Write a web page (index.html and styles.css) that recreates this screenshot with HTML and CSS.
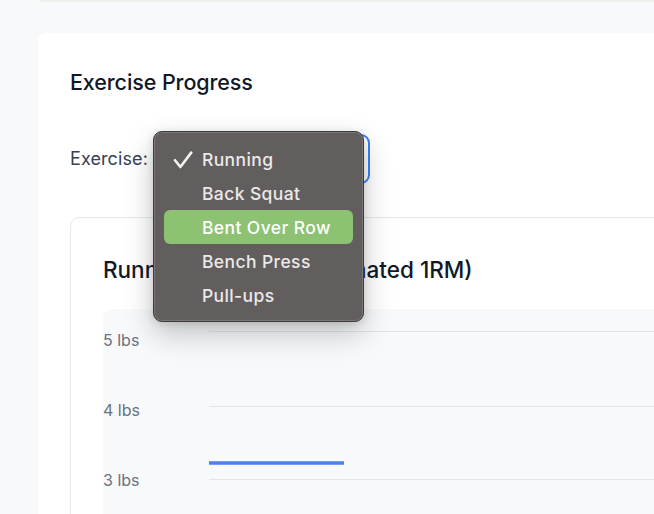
FILE: index.html
```html
<!DOCTYPE html>
<html lang="en">
<head>
<meta charset="utf-8">
<title>Exercise Progress</title>
<link rel="stylesheet" href="styles.css">
</head>
<body>
<div class="page">
  <div class="prev-card"></div>
  <section class="card">
    <h2 class="title">Exercise Progress</h2>
    <div class="picker">
      <label class="label">Exercise:</label>
      <div class="select-wrap">
        <div class="select">Running</div>
        <div class="popup">
          <div class="option checked">
            <svg class="check" width="20" height="18" viewBox="0 0 20 18"><path d="M2 9.2 L7.4 16 L18.2 1.6" fill="none" stroke="#f4f2f2" stroke-width="2.6" stroke-linecap="round" stroke-linejoin="round"/></svg>
            <span>Running</span>
          </div>
          <div class="option"><span>Back Squat</span></div>
          <div class="option active"><span>Bent Over Row</span></div>
          <div class="option"><span>Bench Press</span></div>
          <div class="option"><span>Pull-ups</span></div>
        </div>
      </div>
    </div>
    <div class="chart-card">
      <h3 class="chart-title">Running Progress (Estimated 1RM)</h3>
      <div class="chart">
        <div class="y-axis">
          <span>5 lbs</span>
          <span>4 lbs</span>
          <span>3 lbs</span>
        </div>
        <svg class="plot" width="800" height="260">
          <line x1="0" y1="22.5" x2="800" y2="22.5" stroke="#e3e5e9" stroke-width="1"/>
          <line x1="0" y1="97.5" x2="800" y2="97.5" stroke="#e3e5e9" stroke-width="1"/>
          <line x1="0" y1="170.5" x2="800" y2="170.5" stroke="#e3e5e9" stroke-width="1"/>
          <line x1="0" y1="154" x2="135" y2="154" stroke="#4a81ec" stroke-width="3.6"/>
        </svg>
      </div>
    </div>
  </section>
</div>
</body>
</html>
```

FILE: styles.css
```css
html, body {
  margin: 0;
  padding: 0;
  overflow: hidden;
  background: #f8f9fb;
  font-family: Inter, "Liberation Sans", sans-serif;
}

.page {
  width: 1100px;
}

.prev-card {
  height: 2px;
  margin-left: 40px;
  background: #eff1ec;
  border-bottom-left-radius: 2px;
  margin-bottom: 31px;
}

.card {
  margin-left: 38px;
  width: 1000px;
  background: #ffffff;
  border-radius: 8px;
  padding: 35px 32px 32px;
  box-sizing: border-box;
}

.title {
  margin: 0;
  font-size: 21.5px;
  line-height: 28px;
  font-weight: 500;
  color: #111827;
  letter-spacing: -0.1px;
}

.picker {
  margin-top: 38px;
  height: 50px;
  display: flex;
  align-items: center;
  gap: 10px;
}

.label {
  font-size: 18px;
  line-height: 24px;
  color: #374151;
  letter-spacing: 0.1px;
}

.select-wrap {
  position: relative;
  width: 212px;
  height: 50px;
}

.select {
  box-sizing: border-box;
  height: 50px;
  border: 2px solid #3b82f6;
  border-radius: 9px;
  padding: 12px 14px;
  font-size: 16px;
  color: #111827;
  background: #fff;
}

.popup {
  position: absolute;
  left: -5px;
  top: -3px;
  width: 211px;
  box-sizing: border-box;
  padding: 10px 10px 9px;
  background: #625e5e;
  border: 1px solid #3c3a3a;
  border-radius: 9px;
  box-shadow: inset 0 0 0 1px rgba(255, 255, 255, 0.16), 0 12px 30px rgba(0, 0, 0, 0.22), 0 2px 8px rgba(0, 0, 0, 0.12);
}

.option {
  position: relative;
  height: 34px;
  display: flex;
  align-items: center;
  padding-left: 38px;
  border-radius: 6px;
  font-size: 17.5px;
  font-weight: 500;
  color: #ebe9e9;
  letter-spacing: 0.4px;
}

.option.active {
  background: #8cc272;
  color: #ffffff;
}

.check {
  position: absolute;
  left: 9px;
  top: 9px;
}

.chart-card {
  margin-top: 33px;
  border: 1px solid #e5e7eb;
  border-radius: 9px;
  padding: 36px 32px 32px;
  height: 420px;
  box-sizing: border-box;
}

.chart-title {
  margin: 0 0 23px;
  font-size: 22.5px;
  line-height: 32px;
  font-weight: 500;
  color: #111827;
  letter-spacing: 0;
}

.chart {
  display: flex;
  background: #f8f9fb;
  border-radius: 9px;
  height: 260px;
  overflow: hidden;
}

.y-axis {
  width: 106px;
  flex: none;
  display: flex;
  flex-direction: column;
  gap: 46px;
  padding-top: 19px;
  font-size: 16px;
  line-height: 24px;
  color: #6b7280;
}

.plot {
  flex: none;
  display: block;
}
```
